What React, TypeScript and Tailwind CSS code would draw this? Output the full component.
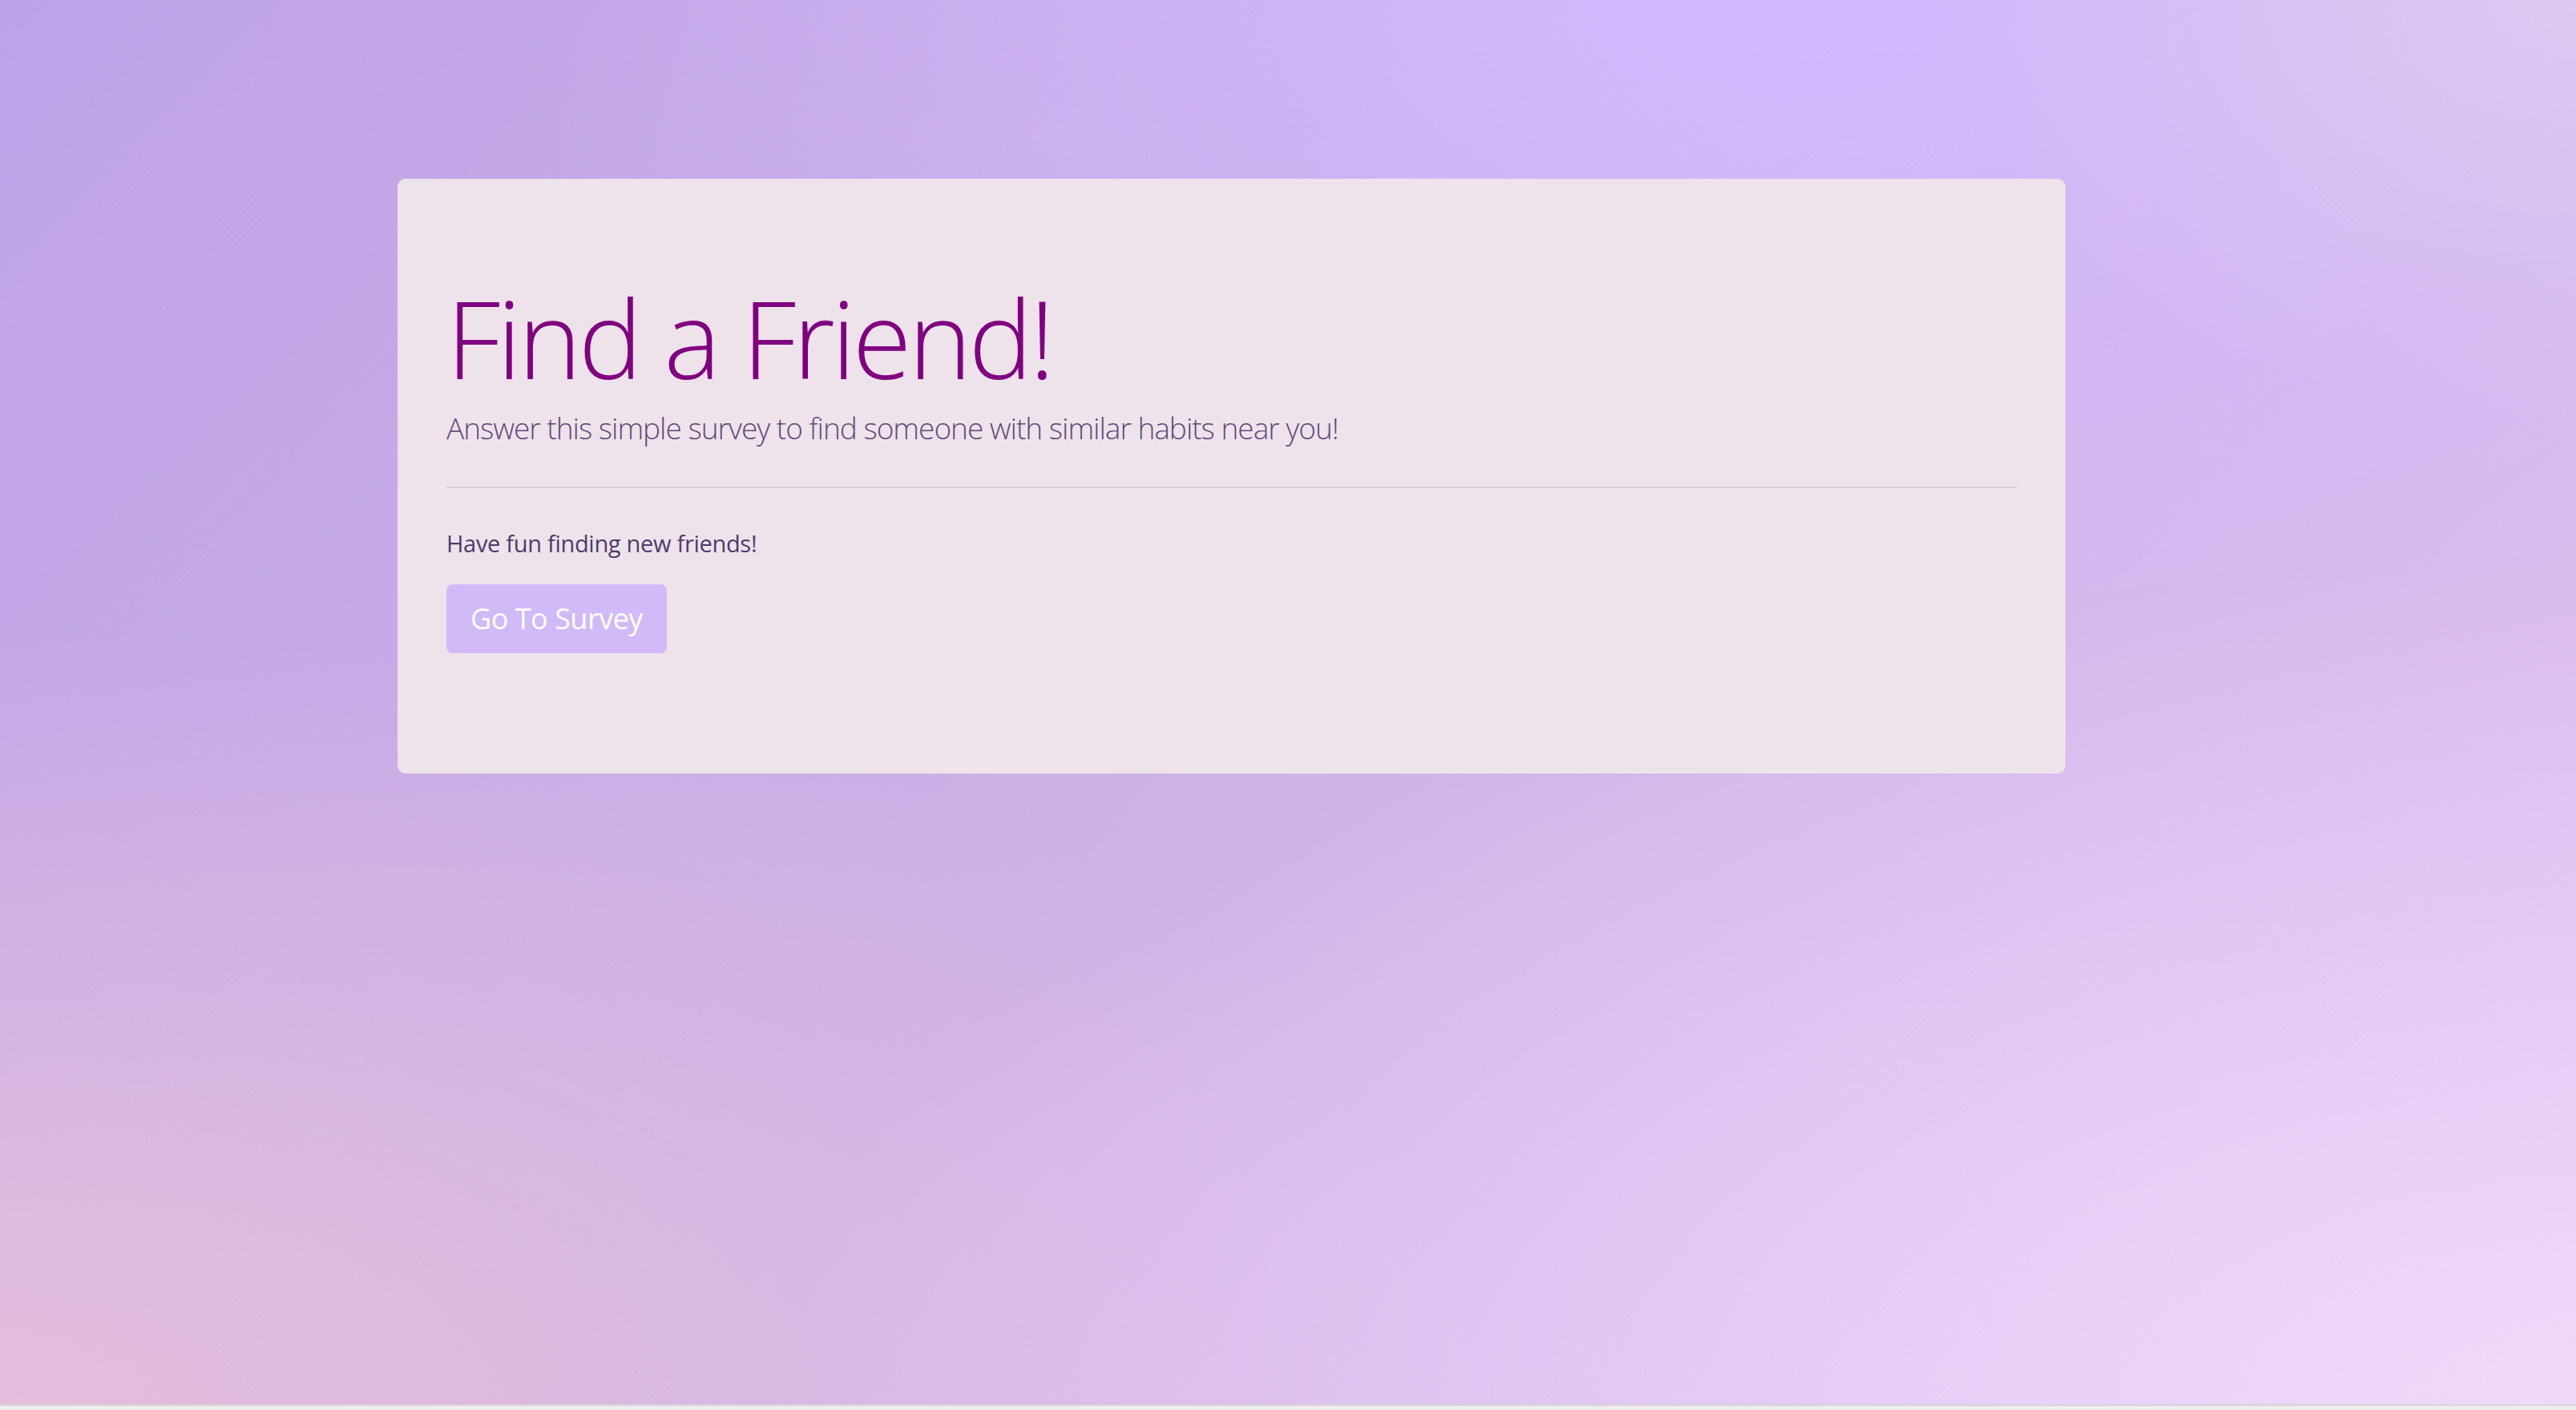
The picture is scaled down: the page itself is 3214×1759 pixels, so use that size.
// App.tsx

import React from 'react'

const bg =
  'bg-[radial-gradient(ellipse_25%_30%_at_100%_0%,#ddc9f1_0%,rgba(221,201,241,0)_100%),radial-gradient(ellipse_50%_50%_at_70%_0%,#d3b8ff_0%,rgba(211,184,255,0)_100%),radial-gradient(ellipse_70%_60%_at_100%_100%,#f0d8fa_0%,rgba(240,216,250,0)_100%),radial-gradient(ellipse_60%_55%_at_0%_100%,#e4bedc_0%,rgba(228,190,220,0)_100%),linear-gradient(135deg,#bea2e8_0%,#cbb0e6_45%,#e0c2f2_100%)]'

const App = () => {
  return (
    <div className="min-h-screen bg-[#efefef] font-['Open_Sans','Noto_Sans',sans-serif]">
      <div className={`flex h-[1754px] w-full flex-col border-b-2 border-[#dcd2dc] ${bg}`}>
        <section className="ml-[496px] mt-[223px] flex w-[2081px] flex-col rounded-[10px] bg-[#eee3ea] pb-[150px] pl-[61px] pr-[60px] pt-[131px]">
          <h1 className="text-[134px] font-light leading-none tracking-[-4px] text-[#800080]">Find a Friend!</h1>
          <p className="mt-[27px] text-[37px] font-light leading-none tracking-[-1px] text-[#5f4b7c]">
            Answer this simple survey to find someone with similar habits near you!
          </p>
          <div className="mt-[55px] h-[2px] w-full bg-[#d8ccd5]" />
          <p className="mt-[54px] text-[29px] leading-none tracking-[-0.3px] text-[#4b3c6c]">Have fun finding new friends!</p>
          <div className="mt-[37px] flex">
            <button className="flex h-[86px] w-[275px] items-center justify-center rounded-[8px] bg-[#d0baf8] text-[36px] leading-none tracking-[-0.5px] text-white">
              Go To Survey
            </button>
          </div>
        </section>
      </div>
    </div>
  )
}

export default App
